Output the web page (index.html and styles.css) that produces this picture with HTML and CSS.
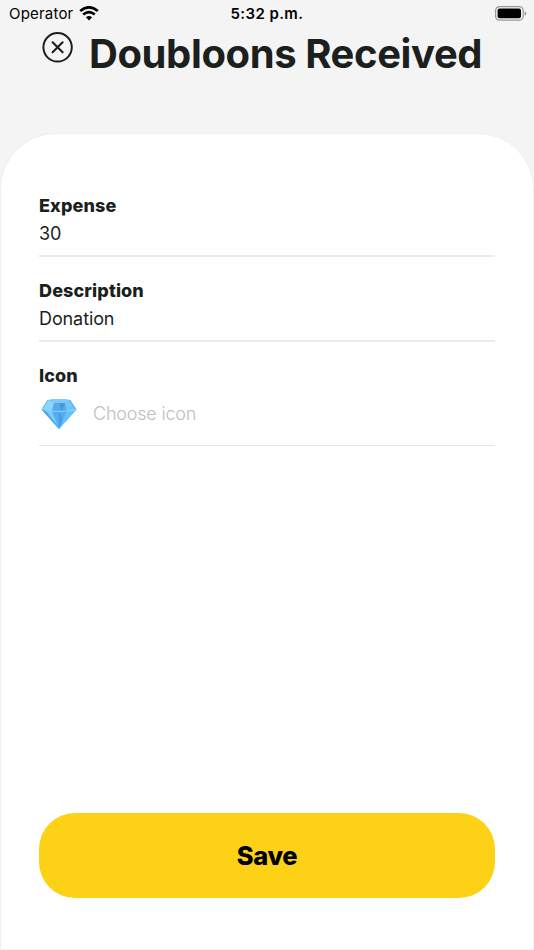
FILE: index.html
```
<!DOCTYPE html>
<html lang="en">
<head>
<meta charset="utf-8">
<title>Doubloons Received</title>
<link rel="stylesheet" href="styles.css">
</head>
<body>
<div class="status">
  <div class="carrier"><span>Operator</span>
    <svg class="wifi" width="20" height="15" viewBox="0 0 20 15"><path d="M1.2 5.1Q10-2.5 18.8 5.1" fill="none" stroke="#000" stroke-width="2.7"/><path d="M4.2 8.5Q10 3.6 15.8 8.5" fill="none" stroke="#000" stroke-width="2.6"/><path d="M6.9 11.2Q10 8.6 13.1 11.2L10 14.4Z"/></svg>
  </div>
  <span class="time">5:32 p.m.</span>
  <svg class="battery" width="32" height="15" viewBox="0 0 32 15"><rect x=".6" y=".6" width="27.6" height="13.6" rx="4" fill="none" stroke="#989898" stroke-width="1.2"/><rect x="2.6" y="2.5" width="23.4" height="9.8" rx="2"/><path d="M29.7 5.2Q31.3 5.8 31.3 7.5T29.7 9.8Z" fill="#989898"/></svg>
</div>
<header class="header">
  <svg class="close" width="32" height="32" viewBox="0 0 32 32" fill="none" stroke="#1b1f1e" stroke-width="2"><circle cx="15.6" cy="16.300" r="14.2"/><path d="M10.600 11.300L20.600 21.300M20.600 11.300L10.600 21.300" stroke-width="2.1" stroke-linecap="round"/></svg>
  <h1 class="title">Doubloons Received</h1>
</header>
<main class="card">
  <div class="field">
    <div class="label">Expense</div>
    <div class="value">30</div>
  </div>
  <div class="field">
    <div class="label">Description</div>
    <div class="value">Donation</div>
  </div>
  <div class="field icon-field">
    <div class="label">Icon</div>
    <div class="picker">
      <svg class="gem" width="36" height="30" viewBox="0 0 36 30"><path d="M7 1Q18-1 29 1L35.5 10.5L18 30L.5 10.5Z" fill="#62b8f5"/><path d="M7 1L13 4L11 12L1.5 10Z" fill="#8cd7ff"/><path d="M7 1Q18-1 29 1L24 4H13Z" fill="#7bcaf9"/><path d="M13 4H24L26 12H11Z" fill="#58a9e8"/><path d="M18 4H24L21 12Z" fill="#4796da"/><path d="M24 4L29 1L35.5 10.5L26 12Z" fill="#72c5fc"/><path d="M.5 10.5L11 12L18 30Z" fill="#4aa5ee"/><path d="M4 11L13 13L17 27Z" fill="#7bcdfd"/><path d="M11 12H26L18 30Z" fill="#54adf1"/><path d="M18 12L22 22L18 30Z" fill="#459be4"/><path d="M26 12L35.5 10.5L18 30Z" fill="#65c2fc"/><path d="M.5 10.5Q18 14.5 35.5 10.5" fill="none" stroke="#9bddff" stroke-width=".8"/><path d="M7 1L2 9M29 1L34 10" stroke="#509de0" stroke-width=".7"/></svg>
      <span class="placeholder">Choose icon</span>
    </div>
  </div>
  <button class="save"><span>Save</span></button>
</main>
</body>
</html>
```
FILE: styles.css
```
* { box-sizing: border-box; }
body {
  margin: 0;
  height: 950px;
  display: flex;
  flex-direction: column;
  background: #f4f4f4;
  color: #1b1f1e;
  font-family: Inter, "Liberation Sans", sans-serif;
  white-space: nowrap;
  overflow: hidden;
}
.status {
  height: 28px;
  flex: none;
  display: grid;
  grid-template-columns: 1fr auto 1fr;
  align-items: center;
  padding: 0 7px 1px 9px;
  color: #000;
  font-size: 15px;
}
.carrier { display: flex; align-items: center; gap: 6px; letter-spacing: .2px; }
.wifi { margin-top: -1px; }
.time { font-weight: 600; letter-spacing: .4px; margin-left: -2px; }
.battery { justify-self: end; }
.header { height: 105px; flex: none; display: flex; padding-left: 42px; }
.close { margin-top: 3px; }
.title { margin: 1px 0 0 15px; font-size: 40px; line-height: 50px; font-weight: 700; letter-spacing: -.4px; }
.card {
  flex: 1;
  display: flex;
  flex-direction: column;
  padding: 60px 38px 51px;
  background: #fff;
  border: 1px solid #f0f0f0;
  border-radius: 56px 56px 0 0;
}
.field { height: 85px; flex: none; }
.field::after { content: ""; display: block; height: 1.5px; margin-top: 10px; background: #ebebeb; }
.label { font-size: 18px; line-height: 23px; font-weight: 800; letter-spacing: .12px; }
.value { font-size: 18px; line-height: 22px; margin-top: 6px; letter-spacing: -.1px; }
.icon-field { height: 110px; }
.picker { display: flex; align-items: center; height: 46px; margin-top: 4px; padding-left: 2px; gap: 16px; }
.icon-field::after { height: 1px; margin-top: 8px; background: #e4e4e4; }
.placeholder { font-size: 18px; font-weight: 300; letter-spacing: -.2px; color: #bdbdbd; margin-top: -2px; }
.save {
  margin-top: auto;
  height: 85px;
  flex: none;
  border: 0;
  border-radius: 36px;
  background: #fcd116;
  color: #000;
  font: 800 25.5px Inter, "Liberation Sans", sans-serif;
  letter-spacing: -.4px;
}
```
